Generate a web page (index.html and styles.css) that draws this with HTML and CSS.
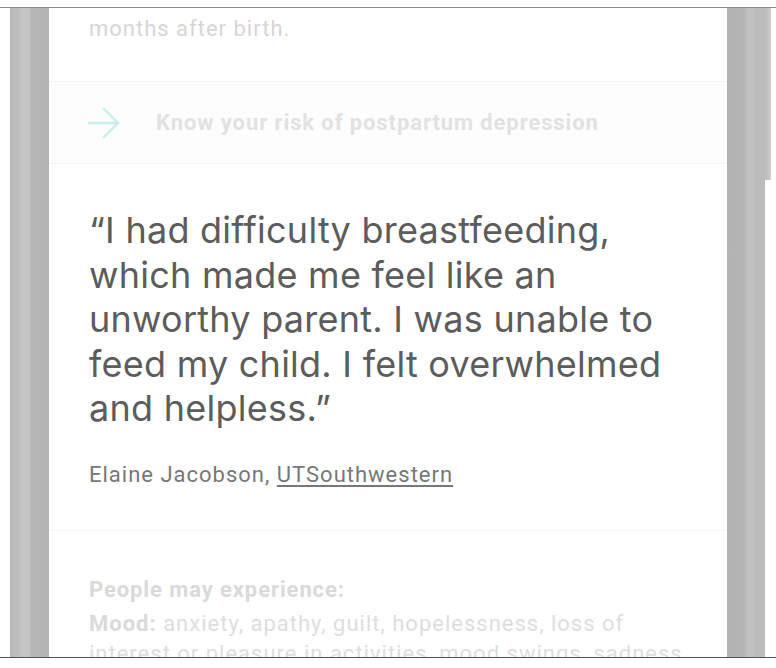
FILE: index.html
```html
<!DOCTYPE html>
<html lang="en">
<head>
<meta charset="utf-8">
<title>Postpartum depression</title>
<link rel="stylesheet" href="styles.css">
</head>
<body>
<div class="screen">
  <div class="frame">
    <div class="gutter"></div>
    <div class="bar bar-left"></div>
    <main class="card">
      <p class="faded-text">months after birth.</p>
      <a class="risk-link" href="#">
        <svg class="arrow" width="32" height="30" viewBox="0 0 32 30" aria-hidden="true">
          <path d="M1 15 H30 M16 1 L30 15 L16 29" fill="none" stroke="#cdeeea" stroke-width="2.4" stroke-linecap="square"/>
        </svg>
        <span>Know your risk of postpartum depression</span>
      </a>
      <section class="quote-block">
        <blockquote class="quote">“I had difficulty breastfeeding, which made me feel like an unworthy parent. I was unable to feed my child. I felt overwhelmed and helpless.”</blockquote>
        <p class="attribution">Elaine Jacobson, <a href="#">UTSouthwestern</a></p>
      </section>
      <section class="symptoms">
        <h3>People may experience:</h3>
        <p><b>Mood:</b> anxiety, apathy, guilt, hopelessness, loss of interest or pleasure in activities, mood swings, sadness or restlessness</p>
      </section>
    </main>
    <div class="bar bar-right"></div>
    <div class="scroll"><div class="thumb"></div></div>
  </div>
</div>
</body>
</html>
```
FILE: styles.css
```css
html, body {
  margin: 0;
  padding: 0;
  background: #ffffff;
}
.screen {
  padding-top: 7px;
  height: 661px;
}
.frame {
  display: flex;
  height: 649px;
  border-top: 1px solid #8c8c8c;
  border-bottom: 1px solid #555555;
  overflow: hidden;
}
.gutter {
  width: 10px;
  flex: none;
}
.bar {
  flex: none;
  height: 100%;
}
.bar-left {
  width: 39px;
  background: linear-gradient(to right, #b9b9b9 0, #bdbdbd 20%, #c6c6c6 35%, #c3c3c3 50%, #b6b6b6 55%, #b4b4b4 100%);
}
.bar-right {
  width: 38px;
  background: linear-gradient(to right, #b3b3b3 0, #b5b5b5 45%, #c2c2c2 55%, #c0c0c0 70%, #bababa 75%, #bcbcbc 100%);
}
.scroll {
  width: 6px;
  flex: none;
}
.thumb {
  height: 172px;
  background: linear-gradient(to right, #bdbdbd 0, #c4c4c4 60%, #d0d0d0 100%);
}
.card {
  width: 678px;
  flex: none;
  background: #ffffff;
  overflow: hidden;
  padding-top: 6px;
  font-family: Roboto, "Liberation Sans", sans-serif;
}
.faded-text {
  margin: 0 40px;
  font-size: 22px;
  line-height: 30px;
  letter-spacing: 1px;
  color: #d6d6d6;
}
.risk-link {
  display: flex;
  align-items: center;
  margin-top: 37px;
  height: 81px;
  padding: 0 39px;
  background: #fdfdfd;
  border-top: 1px solid #f6f6f6;
  border-bottom: 1px solid #f6f6f6;
  text-decoration: none;
  font-size: 22px;
  font-weight: 700;
  letter-spacing: 0.9px;
  color: #e2e2e2;
}
.arrow {
  flex: none;
  margin-right: 36px;
}
.quote-block {
  padding: 44px 40px 40px;
  border-bottom: 1px solid #f6f6f6;
}
.quote {
  margin: 0;
  font-family: Inter, "Open Sans", sans-serif;
  font-size: 36px;
  line-height: 44.5px;
  letter-spacing: 0.25px;
  color: #5c5c5c;
}
.attribution {
  margin: 29px 0 0;
  font-size: 22px;
  line-height: 30px;
  letter-spacing: 1px;
  color: #777777;
}
.attribution a {
  color: #777777;
  text-decoration: underline;
  text-underline-offset: 3px;
}
.symptoms {
  padding: 44px 40px 0;
  font-size: 22px;
  line-height: 30px;
  letter-spacing: 1px;
  color: #dedede;
}
.symptoms h3 {
  margin: 0 0 4px;
  font-size: 22px;
  font-weight: 700;
  letter-spacing: 0.9px;
  color: #dadada;
}
.symptoms p {
  margin: 0;
}
.symptoms b {
  color: #dadada;
}
```
